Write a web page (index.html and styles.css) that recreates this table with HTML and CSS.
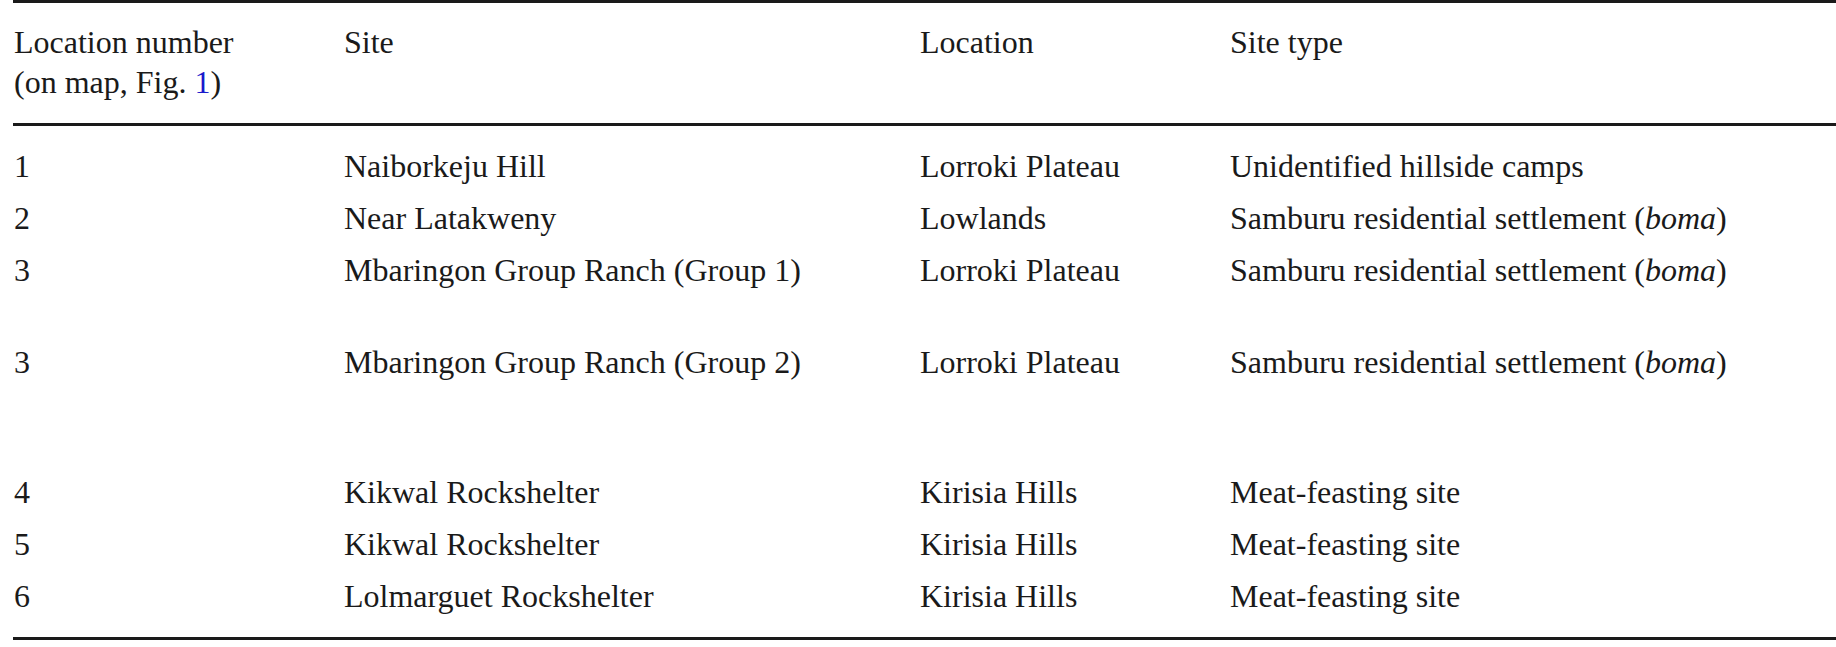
FILE: index.html
```html
<!DOCTYPE html>
<html lang="en">
<head>
<meta charset="utf-8">
<title>Table</title>
<link rel="stylesheet" href="styles.css">
</head>
<body>
<table class="data-table">
  <colgroup>
    <col class="c1">
    <col class="c2">
    <col class="c3">
    <col class="c4">
  </colgroup>
  <thead>
    <tr>
      <th>Location number<br>(on map, Fig. <a class="ref" href="#fig1">1</a>)</th>
      <th>Site</th>
      <th>Location</th>
      <th>Site type</th>
    </tr>
  </thead>
  <tbody>
    <tr>
      <td>1</td><td>Naiborkeju Hill</td><td>Lorroki Plateau</td><td>Unidentified hillside camps</td>
    </tr>
    <tr>
      <td>2</td><td>Near Latakweny</td><td>Lowlands</td><td>Samburu residential settlement (<i>boma</i>)</td>
    </tr>
    <tr class="tall-2">
      <td>3</td><td>Mbaringon Group Ranch (Group 1)</td><td>Lorroki Plateau</td><td>Samburu residential settlement (<i>boma</i>)</td>
    </tr>
    <tr class="tall-3">
      <td>3</td><td>Mbaringon Group Ranch (Group 2)</td><td>Lorroki Plateau</td><td>Samburu residential settlement (<i>boma</i>)</td>
    </tr>
    <tr>
      <td>4</td><td>Kikwal Rockshelter</td><td>Kirisia Hills</td><td>Meat-feasting site</td>
    </tr>
    <tr>
      <td>5</td><td>Kikwal Rockshelter</td><td>Kirisia Hills</td><td>Meat-feasting site</td>
    </tr>
    <tr>
      <td>6</td><td>Lolmarguet Rockshelter</td><td>Kirisia Hills</td><td>Meat-feasting site</td>
    </tr>
  </tbody>
</table>
</body>
</html>
```

FILE: styles.css
```css
html, body {
  margin: 0;
  padding: 0;
  background: #ffffff;
}

body {
  font-family: "Liberation Serif", "Times New Roman", serif;
  font-size: 32px;
  line-height: 40px;
  color: #1a1a1a;
  overflow: hidden;
}

.data-table {
  margin-left: 13px;
  width: 1823px;
  table-layout: fixed;
  border-collapse: separate;
  border-spacing: 0;
}

.c1 { width: 330px; }
.c2 { width: 576px; }
.c3 { width: 310px; }
.c4 { width: 607px; }

.data-table th,
.data-table td {
  text-align: left;
  vertical-align: top;
  font-weight: normal;
  padding: 6px 0 6px 1px;
  white-space: nowrap;
}

.data-table th {
  padding-top: 19px;
  padding-bottom: 21px;
  border-top: 3px solid #1a1a1a;
  border-bottom: 3px solid #1a1a1a;
}

.data-table tbody tr:first-child td {
  padding-top: 20px;
}

.data-table tbody tr:last-child td {
  padding-bottom: 21px;
  border-bottom: 3px solid #1a1a1a;
}

.data-table tr.tall-2 td {
  padding-bottom: 46px;
}

.data-table tr.tall-3 td {
  padding-bottom: 84px;
}

.ref {
  color: #1a1acc;
  text-decoration: none;
}
```
